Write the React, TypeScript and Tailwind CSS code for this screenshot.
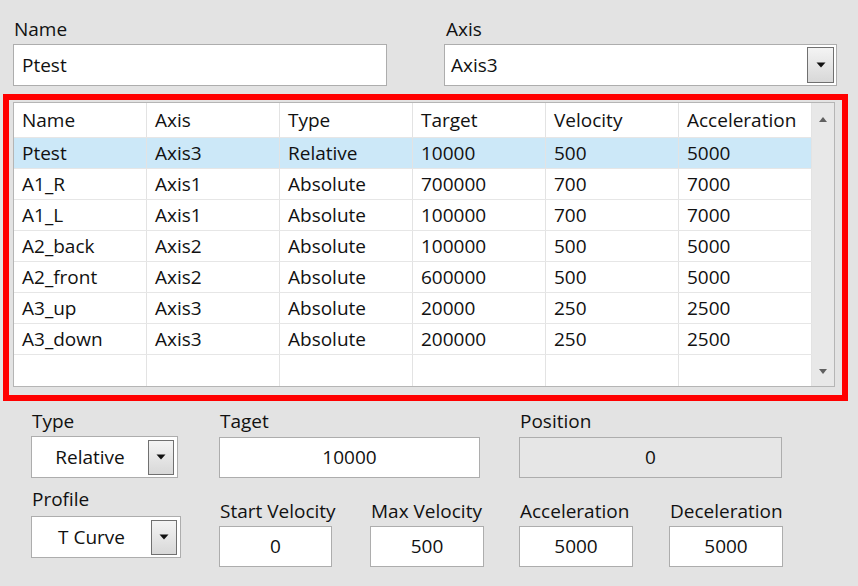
import React from 'react';

const rows: string[][] = [
  ['Ptest', 'Axis3', 'Relative', '10000', '500', '5000'],
  ['A1_R', 'Axis1', 'Absolute', '700000', '700', '7000'],
  ['A1_L', 'Axis1', 'Absolute', '100000', '700', '7000'],
  ['A2_back', 'Axis2', 'Absolute', '100000', '500', '5000'],
  ['A2_front', 'Axis2', 'Absolute', '600000', '500', '5000'],
  ['A3_up', 'Axis3', 'Absolute', '20000', '250', '2500'],
  ['A3_down', 'Axis3', 'Absolute', '200000', '250', '2500'],
  ['', '', '', '', '', ''],
];

const headers = ['Name', 'Axis', 'Type', 'Target', 'Velocity', 'Acceleration'];

const DropButton = ({ className = '' }: { className?: string }) => (
  <div
    className={`w-[26px] h-[35px] border border-[#707070] bg-linear-to-b from-[#f4f4f4] to-[#d8d8d8] flex items-center justify-center shrink-0 ${className}`}
  >
    <svg width="10" height="6" viewBox="0 0 10 6">
      <path d="M0.5 0.5H9.5L5 5.5Z" fill="#111" />
    </svg>
  </div>
);

const Label = ({ text, className = '' }: { text: string; className?: string }) => (
  <div className={`leading-6 pl-[1px] whitespace-nowrap ${className}`}>{text}</div>
);

const NumBox = ({ value, className = '', gray = false }: { value: string; className?: string; gray?: boolean }) => (
  <div
    className={`h-[41px] border border-[#adadad] flex items-center justify-center ${gray ? 'bg-[#e6e6e6]' : 'bg-white'} ${className}`}
  >
    {value}
  </div>
);

const Combo = ({ value, width }: { value: string; width: string }) => (
  <div className={`${width} h-[42px] border border-[#adadad] bg-white flex items-center pr-[3px]`}>
    <div className="flex-1 text-center">{value}</div>
    <DropButton />
  </div>
);

export default function App() {
  return (
    <div className="w-[858px] h-[586px] bg-[#e3e3e3] font-['Open_Sans',sans-serif] text-[19px] text-[#111] overflow-hidden">
      {/* Top fields */}
      <div className="flex pt-[17px]">
        <div className="ml-[13px] w-[374px]">
          <Label text="Name" className="mb-[3px]" />
          <div className="h-[42px] border border-[#adadad] bg-white flex items-center pl-[8px]">Ptest</div>
        </div>
        <div className="ml-[57px] w-[393px]">
          <Label text="Axis" className="mb-[3px] pl-[2px]" />
          <div className="h-[42px] border border-[#adadad] bg-white flex items-center pl-[6px] pr-[2px]">
            <div className="flex-1">Axis3</div>
            <DropButton className="w-[27px] h-[36px]" />
          </div>
        </div>
      </div>

      {/* Points table */}
      <div className="mt-[8px] ml-[3px] w-[845px] border-[6px] border-[#f00] pl-[4px] pt-[2px] pb-[8px]">
        <div className="w-[822px] border border-[#b5b5b5] bg-white flex">
          <div className="w-[798px]">
            <div className="flex h-[35px] border-b border-[#e6e6e6]">
              {headers.map(h => (
                <div key={h} className="w-[133px] border-r border-[#e3e3e3] pl-[8px] flex items-center">
                  {h}
                </div>
              ))}
            </div>
            {rows.map((r, i) => (
              <div
                key={i}
                className={`flex h-[31px] ${i < rows.length - 1 ? 'border-b border-[#e6e6e6]' : ''} ${i === 0 ? 'bg-[#cce8f8]' : ''}`}
              >
                {r.map((c, j) => (
                  <div key={j} className="w-[133px] border-r border-[#e3e3e3] pl-[8px] flex items-center">
                    {c}
                  </div>
                ))}
              </div>
            ))}
          </div>
          <div className="w-[22px] bg-[#e8e8e8] flex flex-col items-center justify-between pt-[14px] pb-[12px]">
            <svg width="8" height="5" viewBox="0 0 8 5">
              <path d="M0 5L4 0L8 5Z" fill="#606060" />
            </svg>
            <svg width="8" height="5" viewBox="0 0 8 5">
              <path d="M0 0L4 5L8 0Z" fill="#606060" />
            </svg>
          </div>
        </div>
      </div>

      {/* Motion parameters */}
      <div className="flex mt-[8px] ml-[31px]">
        <div className="w-[150px]">
          <Label text="Type" className="mb-[3px]" />
          <Combo value="Relative" width="w-[147px]" />
          <Label text="Profile" className="mt-[9px] mb-[5px]" />
          <Combo value="T Curve" width="w-[150px]" />
        </div>
        <div className="ml-[38px]">
          <div className="flex">
            <div className="w-[261px]">
              <Label text="Taget" className="mb-[4px]" />
              <NumBox value="10000" />
            </div>
            <div className="ml-[39px] w-[263px]">
              <Label text="Position" className="mb-[4px]" />
              <NumBox value="0" gray />
            </div>
          </div>
          <div className="flex mt-[21px]">
            <div className="w-[113px]">
              <Label text="Start Velocity" className="mb-[3px]" />
              <NumBox value="0" />
            </div>
            <div className="ml-[38px] w-[114px]">
              <Label text="Max Velocity" className="mb-[3px]" />
              <NumBox value="500" />
            </div>
            <div className="ml-[35px] w-[114px]">
              <Label text="Acceleration" className="mb-[3px]" />
              <NumBox value="5000" />
            </div>
            <div className="ml-[36px] w-[114px]">
              <Label text="Deceleration" className="mb-[3px]" />
              <NumBox value="5000" />
            </div>
          </div>
        </div>
      </div>
    </div>
  );
}
